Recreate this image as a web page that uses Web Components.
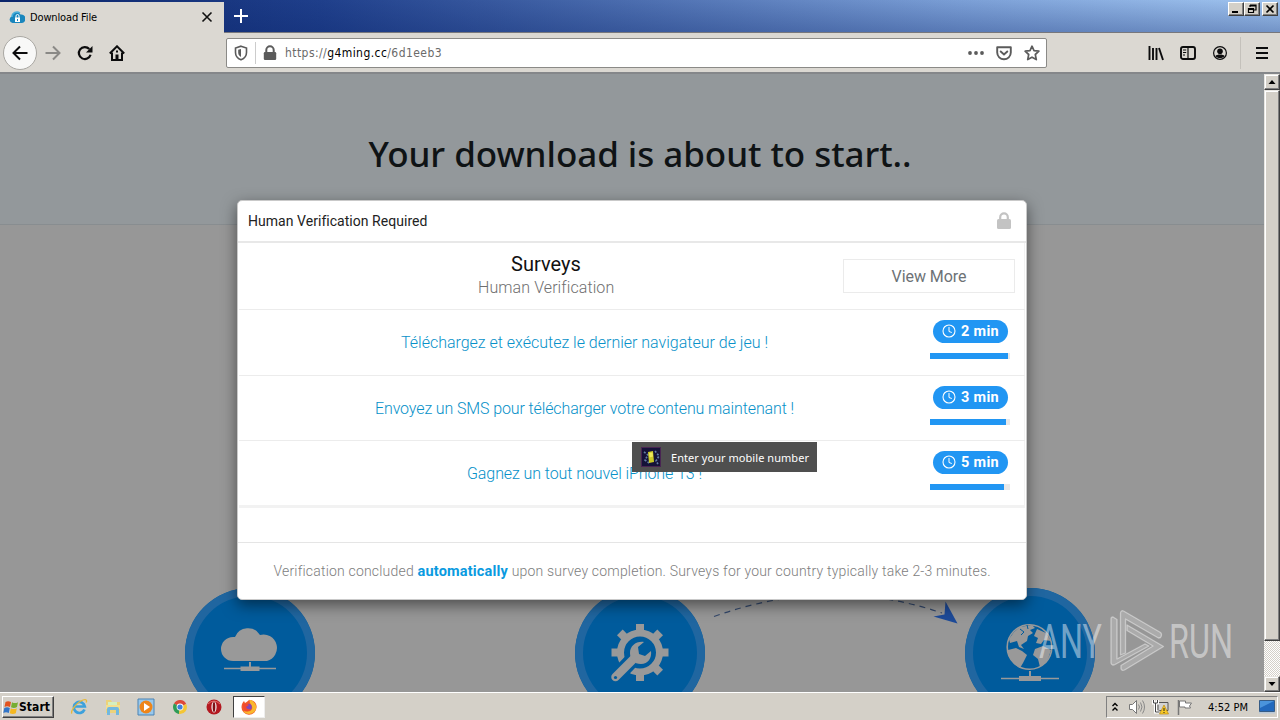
<!DOCTYPE html>
<html lang="en">
<head>
<meta charset="utf-8">
<title>Download File</title>
<style>
  * { box-sizing: border-box; }
  body {
    margin: 0;
    width: 1280px;
    height: 720px;
    overflow: hidden;
    display: flex;
    flex-direction: column;
    font-family: "DejaVu Sans Condensed", "DejaVu Sans", sans-serif;
    font-size: 11px;
    color: #000;
  }
</style>
</head>
<body>
  <tab-strip></tab-strip>
  <nav-toolbar></nav-toolbar>
  <page-view></page-view>
  <task-bar></task-bar>

<script>
const ICONS = {
  cloudlock: ['0 0 16 14', '<path d="M3.5 13a3.3 3.3 0 0 1-.6-6.400A4.700 4.700 0 0 1 11.500 4.500 4.300 4.300 0 0 1 13 13Z" fill="#1a86bd"/><path d="M3 7a5 5 0 0 1 8-4" fill="none" stroke="#47aedb" stroke-width="1.500"/><path d="M6 7.500h5v4.500H6Z" fill="#fff"/><path d="M7 8V6a1.500 1.500 0 0 1 3 0v2" fill="none" stroke="#fff"/><path d="M8.500 9v2" stroke="#1a86bd"/>'],
  close: ['0 0 16 16', '<path d="m3.500 3.500 9 9m0-9-9 9" stroke="#111" stroke-width="1.600"/>'],
  plus: ['0 0 16 16', '<path d="M8 1v14M1 8h14" stroke="#fff" stroke-width="2"/>'],
  back: ['0 0 16 16', '<path d="M15.500 8H2m6-6.500L1.500 8 8 14.500" fill="none" stroke="#0c0c0d" stroke-width="2"/>'],
  forward: ['0 0 16 16', '<path d="M.500 8H14M8 1.500 14.500 8 8 14.500" fill="none" stroke="#8a8986" stroke-width="2"/>'],
  reload: ['0 0 16 16', '<path d="M13.600 9.800A6 6 0 1 1 12.300 4" fill="none" stroke="#0c0c0d" stroke-width="2.200"/><path d="M15.500 1v6.500H9Z" fill="#0c0c0d"/>'],
  home: ['0 0 16 16', '<path d="M.8 8.500 8 1.300l7.200 7.200" fill="none" stroke="#0c0c0d" stroke-width="2"/><path d="M3 7.500V15h10V7.500" fill="none" stroke="#0c0c0d" stroke-width="2"/><path d="M6.500 15V9.500h3V15Z" fill="#0c0c0d"/><path d="M8 5.500v2" stroke="#0c0c0d" stroke-width="2"/>'],
  shield: ['0 0 16 16', '<path d="M8 1.200 13.500 3v4.500c0 3.500-2.200 6-5.500 7.300C4.700 13.500 2.500 11 2.500 7.500V3Z" fill="none" stroke="#5b5b5b" stroke-width="1.600"/><path d="M8 4v8C6 10.800 5.200 9.500 5.200 7.500V4.800Z" fill="#5b5b5b"/>'],
  lock: ['0 0 16 16', '<path d="M4.300 8V5a3.700 3.700 0 0 1 7.400 0v3" fill="none" stroke="currentColor" stroke-width="2"/><rect x="1.800" y="7" width="12.400" height="8" rx="1.200" fill="currentColor"/>'],
  dots: ['0 0 16 16', '<g fill="#5b5b5b"><circle cx="2" cy="8" r="1.900"/><circle cx="8" cy="8" r="1.900"/><circle cx="14" cy="8" r="1.900"/></g>'],
  pocket: ['0 0 16 16', '<path d="M1.200 2.200h13.600v5.300a6.800 6.800 0 0 1-13.600 0Z" fill="none" stroke="#5b5b5b" stroke-width="1.900" stroke-linejoin="round"/><path d="m4.700 6.500 3.300 3 3.300-3" fill="none" stroke="#5b5b5b" stroke-width="1.900" stroke-linecap="round"/>'],
  star: ['0 0 16 16', '<path d="m8 1.200 2 4.500 4.900.5-3.600 3.300 1 5.100L8 12.200l-4.300 2.400 1-5.100L1.100 6.200 6 5.700Z" fill="none" stroke="#5b5b5b" stroke-width="1.700" stroke-linejoin="round"/>'],
  library: ['0 0 16 16', '<path d="M1.500 1v14M5 3v12M8.500 3v12M11 3l4 12" fill="none" stroke="#0c0c0d" stroke-width="1.900"/>'],
  sidebar: ['0 0 16 16', '<rect x="1" y="2" width="14" height="12" rx="2" fill="none" stroke="#0c0c0d" stroke-width="1.900"/><path d="M8 2v12M3 5h3.200M3 7.500h3.200M3 10h2" stroke="#0c0c0d" stroke-width="1.200"/>'],
  account: ['0 0 16 16', '<circle cx="8" cy="8" r="6.400" fill="none" stroke="#0c0c0d" stroke-width="1.200"/><circle cx="8" cy="6.300" r="2.800" fill="#0c0c0d"/><path d="M3.500 11c1-2 8-2 9 0-1.500 2.800-7.500 2.800-9 0Z" fill="#0c0c0d"/>'],
  menu: ['0 0 16 16', '<path d="M2 3h12M2 8h12M2 13h12" stroke="#0c0c0d" stroke-width="2"/>'],
  minimize: ['0 0 12 10', '<path d="M2 8h6" stroke="#000" stroke-width="2"/>'],
  restore: ['0 0 12 10', '<path d="M4 1h6v5H8M4 1v2M4 2h6" fill="none" stroke="#000" stroke-width="1.200"/><path d="M2.500 4.500h5v4h-5Zm0 .8h5" fill="none" stroke="#000" stroke-width="1.200"/>'],
  winclose: ['0 0 12 10', '<path d="m2.500 1.500 7 7m0-7-7 7" stroke="#000" stroke-width="1.700"/>'],
  up: ['0 0 8 8', '<path d="M4 2 7.500 6H.5Z" fill="#000"/>'],
  down: ['0 0 8 8', '<path d="M4 6 .5 2h7Z" fill="#000"/>'],
  padlock: ['0 0 14 17', '<path d="M3.200 8V5.200a3.800 3.800 0 0 1 7.600 0V8" fill="none" stroke="#c3c3c3" stroke-width="2.200"/><rect y="7" width="14" height="10" rx="1.500" fill="#c3c3c3"/>'],
  clock: ['0 0 14 14', '<circle cx="7" cy="7" r="6" fill="none" stroke="#fff" stroke-width="1.100"/><path d="M7 3v4.500l2.800 1" fill="none" stroke="#fff"/>'],
  game: ['0 0 20 20', '<path d="M0 0h20v20H0Z" fill="#141238"/><path d="M0 0h20v20H0Z" fill="none" stroke="#482452" stroke-width="2"/><path d="M3 5l4 3-3 5 4 3m6-12 4 5-3 5 2 3" fill="none" stroke="#617fa5" stroke-width="1.600" stroke-dasharray="2 1.500"/><path d="m7 5 5-1 1 11-5 1Z" fill="#c9c826"/><path d="m8 6 3.500-.5.500 4-3.500 1Z" fill="#ece95a"/>'],
  cloud: ['0 0 130 130', '<path d="M48 73a12 12 0 0 1 0-24h2a14 14 0 0 1 25-2A12.500 12.500 0 1 1 82 73Z" fill="#999"/><path d="M39 80.500h52" stroke="#999" stroke-width="1.500"/><path d="M55.500 78.500h19v4.500h-19ZM64 74h2v5h-2Z" fill="#999"/>'],
  gear: ['0 0 130 130', '<g fill="#999"><path d="M61 43v-7h8v7Z"/><path d="M61 43v-7h8v7Z" transform="rotate(45 65 64.500)"/><path d="M61 43v-7h8v7Z" transform="rotate(90 65 64.500)"/><path d="M61 43v-7h8v7Z" transform="rotate(135 65 64.500)"/><path d="M61 43v-7h8v7Z" transform="rotate(180 65 64.500)"/><path d="M61 43v-7h8v7Z" transform="rotate(270 65 64.500)"/><path d="M61 43v-7h8v7Z" transform="rotate(315 65 64.500)"/></g><circle cx="65" cy="64.500" r="19.500" fill="none" stroke="#999" stroke-width="7"/><path d="m40 90 20-21" stroke="#005b9c" stroke-width="15"/><path d="m40.500 89 20-20" stroke="#999" stroke-width="8.500" stroke-linecap="round"/><path d="M69 54c-8-1-14 4-14 11 0 6 4 11 11 11 7 0 11-6 10-13l-6 5-6-2-1-7Z" fill="#999"/><circle cx="40.500" cy="89.500" r="1.600" fill="#005b9c"/>'],
  globe: ['0 0 130 130', '<circle cx="64.500" cy="59" r="22.300" fill="none" stroke="#999" stroke-width="1.600"/><path d="m49 44 6-5 12-2 3 3-5 2 3 3-5 3-1 5-6 4 3 4-5-2-2-6-7 2-1-4Zm23-3 9 4 5 8-7-1-3 4-5-1 2-5-4-2ZM43 62l8-2 6 3 5 4-4 8-3 5-6-4-6-9ZM70 61l8-3 8 4-4 12-7 5-2-8-5-4Z" fill="#999"/><path d="M55 41l4 3-3 3M62 37l1 4" stroke="#005b9c" fill="none"/><path d="M36 90.500h58" stroke="#999" stroke-width="1.500"/><path d="M54 88h22v5H54ZM64 83h2v5h-2Z" fill="#999"/>'],
  windows: ['0 0 16 16', '<path d="M2.500 3Q5 1.300 8 3L7 8Q4 6.500 1.500 8Z" fill="#e2531f"/><path d="M9 3.200q3 1.700 6 0L14 8q-3 1.700-6 .2Z" fill="#77ae33"/><path d="M1.300 9Q4 7.500 6.800 9l-1 5Q3 12.500.3 14Z" fill="#3275c8"/><path d="M7.800 9.200q3 1.700 6 0l-1 5q-3 1.500-6 0Z" fill="#f5b821"/>'],
  ie: ['0 0 18 18', '<path d="M14.500 11.500a5.500 5.500 0 1 1 .3-3H5" fill="none" stroke="#3da1dc" stroke-width="2.700"/><path d="M2 15.500C0 13 7 4 13 2c4-1.200 4 1 3 2.500" fill="none" stroke="#e6b83b" stroke-width="1.300"/>'],
  explorer: ['0 0 18 18', '<path d="M2 2h5l1 2h8v11H2Z" fill="#ecd27a"/><path d="M4 4h9v5H4Z" fill="#d5efbe"/><path d="M2 7h14v4H2Z" fill="#f3df90"/><path d="M3 17v-6q0-2 2-2h8q2 0 2 2v6h-3v-5H6v5Z" fill="#72b8df"/>'],
  player: ['0 0 18 18', '<path d="M1 1h16v16H1Z" fill="#98c8ec" stroke="#4b83b4"/><circle cx="9" cy="9" r="6.500" fill="#ee8519"/><path d="m7 5 6 4-6 4Z" fill="#fff"/>'],
  chrome: ['0 0 18 18', '<path d="M9 9 3 5.500A6.800 6.800 0 0 1 15.200 6Z" fill="#dd4939"/><path d="M9 9 3 5.500A7 7 0 0 0 8 16Z" fill="#2e9b56"/><path d="M9 9l6.200-3A7 7 0 0 1 8 16Z" fill="#f4c635"/><circle cx="9" cy="9" r="3.400" fill="#fff"/><circle cx="9" cy="9" r="2.600" fill="#3f7fda"/>'],
  opera: ['0 0 18 18', '<circle cx="9" cy="9" r="7.500" fill="#b31820"/><path d="M3 6q6-6 12 0" fill="none" stroke="#e36b65"/><ellipse cx="9" cy="9" rx="2.600" ry="5.500" fill="#f3eaea"/><ellipse cx="9" cy="9" rx="1.300" ry="5" fill="#7f1015"/>'],
  firefox: ['0 0 18 18', '<path d="M9 2c5 0 8 3 7.500 7.500A7.500 7.500 0 0 1 1.500 9C1.500 6 3 4 4 3l1 2Q7 4 9 2Z" fill="#f2592b"/><path d="M9 1c3 1 7 4 7.300 8a7 7 0 0 1-7 7c-3 0-5-1-6-3q8 2 9-3c0-3-3-4-3-9Z" fill="#f9b82f"/><circle cx="8.500" cy="9" r="3.300" fill="#8348b7"/><path d="M3 6q4-1 6 1l-3 2q1 3 5 2-2 3-5 2-3-1-3-7Z" fill="#f14a2f"/>'],
  chevrons: ['0 0 8 12', '<path d="M1.500 5 4 2.500 6.500 5M1.500 9.500 4 7l2.500 2.500" fill="none" stroke="#000" stroke-width="1.400"/>'],
  speaker: ['0 0 18 16', '<path d="M1.500 5.500h3l4-4v13l-4-4h-3Z" fill="#fff" stroke="#777"/><path d="M10.500 5.500q2 2.500 0 5m2-7q3 4.500 0 9m2-11q4 6.500 0 13" fill="none" stroke="#888"/>'],
  network: ['0 0 18 16', '<path d="M6 3.500h10v8H6Z" fill="#d3d3d3" stroke="#555"/><path d="M1.500 1v3h4V1M3.500 4v9h4" fill="none" stroke="#fff" stroke-width="3"/><path d="M1.500 1v3h4V1M3.500 4v9h4" fill="none" stroke="#444"/><path d="m12 6 4.500 9h-9Z" fill="#f8c927" stroke="#bb8a11" stroke-width=".7"/><path d="M12 9v3m0 1v1" stroke="#222"/>'],
  flag: ['0 0 18 16', '<path d="M2.500 1v15" stroke="#777" stroke-width="1.500"/><path d="M3.500 2h6v2h6l-2 3 1 2H9V8H3.500Z" fill="#fff" stroke="#777"/>'],
  desktop: ['0 0 16 14', '<path d="M.5.500h15v11H.5Z" fill="#2269bd" stroke="#365c86"/><path d="M1 1h14L1 8Z" fill="#4a94dc"/><path d="M0 12h16v1.500H0Z" fill="#b8c8d8"/>']
};

// base class: opens the shadow root and fills it once attached
class Base extends HTMLElement {
  constructor() {
    super();
    this.attachShadow({ mode: 'open' });
  }
  connectedCallback() {
    this.shadowRoot.innerHTML = `<style>* { box-sizing: border-box; }</style>${this.render()}`;
  }
}

class UiIcon extends Base {
  render() {
    const [box, body] = ICONS[this.getAttribute('name')];
    const w = this.getAttribute('w') || 16;
    const h = this.getAttribute('h') || w;
    return `
      <style>
        :host { display: block; flex: none; }
        svg { display: block; }
      </style>
      <svg width="${w}" height="${h}" viewBox="${box}">${body}</svg>`;
  }
}
customElements.define('ui-icon', UiIcon);

// single line of text, tracked so that it fills the width in px
class FitLine extends Base {
  render() {
    return `
      <style>
        :host { display: inline-block; white-space: nowrap; flex: none; }
      </style>
      <span><slot></slot></span>`;
  }
  connectedCallback() {
    super.connectedCallback();
    const width = Number(this.getAttribute('width'));
    const span = this.shadowRoot.querySelector('span');
    const natural = span.getBoundingClientRect().width;
    const count = this.textContent.length;
    this.style.width = `${width}px`;
    span.style.letterSpacing = `${(width - natural) / count}px`;
  }
}
customElements.define('fit-line', FitLine);

class TabStrip extends Base {
  render() {
    return `
      <style>
        :host {
          display: flex;
          height: 33px;
          background:
            linear-gradient(to bottom, rgba(10, 36, 106, 0) 0%, rgba(10, 36, 106, .3) 100%),
            linear-gradient(to right, #0a246a 0, #1f3f8b 25%, #7b9fd6 75%, #a0c4ef 100%);
          border-bottom: 1px solid #77777c;
        }
        .tab {
          width: 224px;
          margin-top: 2px;
          height: 31px;
          background: #dbd8d2;
          display: flex;
          align-items: center;
          padding: 0 9px 1px;
          gap: 5px;
        }
        .tab .x { margin-left: auto; }
        .add { padding: 8px 9px; }
        .controls { margin-left: auto; display: flex; padding: 2px 2px; }
        .btn {
          width: 16px;
          height: 14px;
          background: #d4d0c8;
          border: 1px solid;
          border-color: #fff #404040 #404040 #fff;
          box-shadow: inset -1px -1px #808080;
          padding: 1px;
        }
        .btn:last-child { margin-left: 2px; }
      </style>
      <div class="tab">
        <ui-icon name="cloudlock" w="16" h="14"></ui-icon>
        <fit-line width="67">Download File</fit-line>
        <ui-icon class="x" name="close" w="16"></ui-icon>
      </div>
      <div class="add"><ui-icon name="plus" w="16"></ui-icon></div>
      <div class="controls">
        <div class="btn"><ui-icon name="minimize" w="12" h="10"></ui-icon></div>
        <div class="btn"><ui-icon name="restore" w="12" h="10"></ui-icon></div>
        <div class="btn"><ui-icon name="winclose" w="12" h="10"></ui-icon></div>
      </div>`;
  }
}
customElements.define('tab-strip', TabStrip);

class NavToolbar extends Base {
  render() {
    return `
      <style>
        :host {
          display: flex;
          align-items: center;
          height: 41px;
          background: #dbd8d2;
          border-bottom: 2px solid #85878a;
          padding: 0 10px 0 3px;
        }
        .left { display: flex; align-items: center; gap: 16px; width: 223px; }
        .back {
          width: 34px;
          height: 34px;
          border-radius: 50%;
          border: 1px solid #a9a7a2;
          background: #f8f8f7;
          padding: 8px;
          margin-right: -8px;
        }
        .url {
          width: 821px;
          height: 30px;
          border: 1px solid #8b8a87;
          border-radius: 2px;
          background: #fff;
          display: flex;
          align-items: center;
          padding: 0 6px;
          color: #6a6a6a;
          font-size: 12px;
        }
        .sep { width: 1px; height: 22px; background: #ccc; margin: 0 6px; }
        .host { color: #000; }
        .lock { color: #5b5b5b; margin-right: 7px; }
        .actions { display: flex; gap: 12px; margin-left: auto; }
        .right { display: flex; align-items: center; gap: 16px; margin-left: auto; }
        .line { width: 1px; height: 32px; background: #c4c1bb; margin: 0 -3px 0 -4px; }
      </style>
      <div class="left">
        <div class="back"><ui-icon name="back" w="16"></ui-icon></div>
        <ui-icon name="forward" w="16"></ui-icon>
        <ui-icon name="reload" w="16"></ui-icon>
        <ui-icon name="home" w="16"></ui-icon>
      </div>
      <div class="url">
        <ui-icon name="shield" w="16"></ui-icon>
        <div class="sep"></div>
        <ui-icon class="lock" name="lock" w="16"></ui-icon>
        <fit-line width="157">https://<span class="host">g4ming.cc</span>/6d1eeb3</fit-line>
        <div class="actions">
          <ui-icon name="dots" w="16"></ui-icon>
          <ui-icon name="pocket" w="16"></ui-icon>
          <ui-icon name="star" w="16"></ui-icon>
        </div>
      </div>
      <div class="right">
        <ui-icon name="library" w="16"></ui-icon>
        <ui-icon name="sidebar" w="16"></ui-icon>
        <ui-icon name="account" w="16"></ui-icon>
        <div class="line"></div>
        <ui-icon name="menu" w="16"></ui-icon>
      </div>`;
  }
}
customElements.define('nav-toolbar', NavToolbar);

class ScrollBar extends Base {
  render() {
    return `
      <style>
        :host {
          display: flex;
          flex-direction: column;
          width: 16px;
          flex: none;
          background: repeating-conic-gradient(#fff 0 25%, #d4d0c8 0 50%) 0 0 / 2px 2px;
        }
        .btn, .thumb {
          background: #d4d0c8;
          border: 1px solid;
          border-color: #e8e6e1 #404040 #404040 #e8e6e1;
          box-shadow: inset -1px -1px #808080, inset 1px 1px #fff;
        }
        .btn { height: 16px; padding: 3px; }
        .thumb { height: 551px; margin-bottom: auto; }
      </style>
      <div class="btn"><ui-icon name="up" w="8"></ui-icon></div>
      <div class="thumb"></div>
      <div class="btn"><ui-icon name="down" w="8"></ui-icon></div>`;
  }
}
customElements.define('scroll-bar', ScrollBar);

class FeatureBadge extends Base {
  render() {
    return `
      <style>
        :host {
          display: block;
          width: 130px;
          height: 130px;
          border-radius: 50%;
          background: #005b9c;
          box-shadow: inset 0 0 0 8px #2066a0;
        }
      </style>
      <ui-icon name="${this.getAttribute('icon')}" w="130"></ui-icon>`;
  }
}
customElements.define('feature-badge', FeatureBadge);

class SurveyRow extends Base {
  render() {
    return `
      <style>
        :host {
          display: flex;
          height: 65.5px;
          border-bottom: 1px solid #ececec;
        }
        .title {
          flex: 1;
          text-align: center;
          line-height: 65px;
          font-size: 16px;
          font-weight: 300;
          color: #0791c9;
        }
        .side { width: 95px; padding-top: 10px; }
        .pill {
          width: 75px;
          height: 23px;
          margin-left: 3px;
          border-radius: 12px;
          background: #2196f3;
          color: #fff;
          display: flex;
          align-items: center;
          gap: 5px;
          padding-left: 9px;
          font-size: 14.500px;
          font-weight: 700;
        }
        .pill ui-icon { margin-top: -1px; }
        .track { width: 80px; height: 6px; margin-top: 10px; background: #e8e8e8; }
        .bar { height: 6px; width: ${this.getAttribute('bar')}px; background: #2196f3; }
      </style>
      <div class="title"><slot></slot></div>
      <div class="side">
        <div class="pill"><ui-icon name="clock" w="14"></ui-icon><fit-line width="38">${this.getAttribute('time')}</fit-line></div>
        <div class="track"><div class="bar"></div></div>
      </div>`;
  }
}
customElements.define('survey-row', SurveyRow);

class VerifyModal extends Base {
  render() {
    return `
      <style>
        :host {
          display: flex;
          flex-direction: column;
          width: 790px;
          height: 400px;
          border: 1px solid #c9c9c9;
          border-radius: 5px;
          background: #fff;
          box-shadow: 0 5px 15px rgba(0, 0, 0, .5);
          font-family: Roboto, sans-serif;
        }
        header {
          height: 42px;
          display: flex;
          align-items: center;
          justify-content: space-between;
          padding: 0 15px 0 10px;
          border-bottom: 2px solid #e8e8e8;
          font-size: 14px;
          color: #222;
        }
        header ui-icon { margin-top: -2px; }
        .panel {
          height: 265px;
          margin: 0 1px;
          border-bottom: 3px solid #f2f2f2;
          box-shadow: inset -1px 0 #f2f2f2;
        }
        .top {
          height: 67px;
          display: flex;
          align-items: center;
          padding: 0 10px;
          border-bottom: 1px solid #ececec;
        }
        .names { flex: 1; text-align: center; }
        .names div { height: 23px; line-height: 23px; font-size: 16px; font-weight: 300; color: #6f6f6f; }
        .names .big { font-size: 20px; line-height: 22px; font-weight: 400; color: #111; }
        .more {
          width: 172px;
          height: 34px;
          border: 1px solid #ebebeb;
          line-height: 33px;
          text-align: center;
          font-size: 16px;
          color: #6d7276;
        }
        survey-row:last-child { border-bottom: 0; }
        footer {
          margin-top: auto;
          height: 57px;
          border-top: 1px solid #e5e5e5;
          line-height: 57px;
          text-align: center;
          font-size: 14px;
          font-weight: 300;
          color: #7d7d7d;
        }
        b { color: #0a9ae0; font-weight: 700; font-size: 14.500px; }
      </style>
      <header>
        <fit-line width="179">Human Verification Required</fit-line>
        <ui-icon name="padlock" w="14" h="17"></ui-icon>
      </header>
      <div class="panel">
        <div class="top">
          <div class="names">
            <div class="big"><fit-line width="70">Surveys</fit-line></div>
            <div><fit-line width="136">Human Verification</fit-line></div>
          </div>
          <div class="more"><fit-line width="75">View More</fit-line></div>
        </div>
        <survey-row time="2 min" bar="78"><fit-line width="367">Téléchargez et exécutez le dernier navigateur de jeu !</fit-line></survey-row>
        <survey-row time="3 min" bar="76"><fit-line width="419">Envoyez un SMS pour télécharger votre contenu maintenant !</fit-line></survey-row>
        <survey-row time="5 min" bar="74"><fit-line width="235">Gagnez un tout nouvel iPhone 13 !</fit-line></survey-row>
      </div>
      <footer><fit-line width="717">Verification concluded <b>automatically</b> upon survey completion. Surveys for your country typically take 2-3 minutes.</fit-line></footer>`;
  }
}
customElements.define('verify-modal', VerifyModal);

class AppTooltip extends Base {
  render() {
    return `
      <style>
        :host {
          display: flex;
          align-items: center;
          gap: 10px;
          width: 185px;
          height: 30px;
          padding: 0 9px;
          background: #4f4f4f;
          color: #fff;
          font: 11px "Noto Sans", sans-serif;
        }
      </style>
      <ui-icon name="game" w="20"></ui-icon>
      <fit-line width="138">Enter your mobile number</fit-line>`;
  }
}
customElements.define('app-tooltip', AppTooltip);

class WaterMark extends Base {
  render() {
    return `
      <style>
        :host { display: block; font-family: Roboto, sans-serif; }
        svg { display: block; }
      </style>
      <svg width="220" height="80" viewBox="1030 600 220 80">
        <g fill="#fff" fill-opacity=".46" font-size="49">
          <text x="1039" y="658" textLength="63" lengthAdjust="spacingAndGlyphs">ANY</text>
          <text x="1169" y="658" textLength="64" lengthAdjust="spacingAndGlyphs">RUN</text>
        </g>
        <g fill="#fff" fill-opacity=".2" stroke="#fff" stroke-opacity=".42" stroke-width="1.300" stroke-linejoin="round">
          <path d="M1120.500 655v-42q.5-3 3-2l37 21.500q2 2 0 5l-2 .5-33-19v34Z"/>
          <path d="M1127 625l36.500 21.500-39 23.500q-3 1-3.500-1.500v-3l32-19.500-26-15.500Z"/>
          <path d="M1117 619.500l-4-2.500q-2 0-2 2v44q1 3 4 1.500l34-18.500-4-2-28 15Z"/>
        </g>
      </svg>`;
  }
}
customElements.define('water-mark', WaterMark);

class PageView extends Base {
  render() {
    return `
      <style>
        :host { display: flex; height: 618px; background: #979797; position: relative; }
        .view { flex: 1; overflow: hidden; }
        .content { width: 1280px; }
        .hero {
          height: 151px;
          padding-top: 58px;
          background: #93989b;
          border-bottom: 1px solid #888d90;
          text-align: center;
          font: 500 35px/44px "Noto Sans", sans-serif;
          color: #0f1315;
        }
        .features {
          display: grid;
          grid-template-columns: repeat(3, 390px);
          justify-content: center;
          justify-items: center;
          margin-top: 363px;
        }
        .arrow { position: absolute; left: 705px; top: 506px; }
        verify-modal { position: absolute; left: 237px; top: 126px; }
        app-tooltip { position: absolute; left: 632px; top: 368px; }
        water-mark { position: absolute; left: 1030px; top: 526px; }
      </style>
      <div class="view">
        <div class="content">
          <div class="hero"><fit-line width="543">Your download is about to start..</fit-line></div>
          <div class="features">
            <feature-badge icon="cloud"></feature-badge>
            <feature-badge icon="gear"></feature-badge>
            <feature-badge icon="globe"></feature-badge>
          </div>
        </div>
      </div>
      <svg class="arrow" width="260" height="50" viewBox="705 580 260 50">
        <path d="M714 616.500Q830 575 942 613" fill="none" stroke="#34496c" stroke-width="1.200" stroke-dasharray="6 5"/>
        <path d="m957.500 623.500-24-7 11-2 1-13Z" fill="#1d4a98"/>
      </svg>
      <scroll-bar></scroll-bar>
      <verify-modal></verify-modal>
      <app-tooltip></app-tooltip>
      <water-mark></water-mark>`;
  }
}
customElements.define('page-view', PageView);

class TaskBar extends Base {
  render() {
    return `
      <style>
        :host {
          display: flex;
          align-items: center;
          height: 28px;
          background: #d4d0c8;
          border-top: 1px solid #fff;
          padding: 1px 2px 0;
        }
        .start {
          width: 52px;
          height: 22px;
          display: flex;
          align-items: center;
          gap: 0;
          border: 1px solid;
          border-color: #fff #404040 #404040 #fff;
          box-shadow: inset -1px -1px #808080;
          font-size: 12px;
          font-weight: 700;
        }
        .icons { display: flex; gap: 15.700px; margin-left: 16px; }
        .active {
          width: 32px;
          height: 22px;
          margin-left: 10px;
          padding: 1px 6px;
          background: #fff;
          border: 1px solid;
          border-color: #404040 #eee #eee #404040;
        }
        .tray {
          width: 172px;
          height: 22px;
          margin-left: auto;
          display: flex;
          align-items: center;
          border: 1px solid;
          border-color: #808080 #fff #fff #808080;
          padding: 0 2px 0 4px;
          gap: 6px;
        }
        .clock { margin: 0 5px 0 8px; }
        .wide { margin-left: 3px; }
      </style>
      <div class="start"><ui-icon name="windows" w="16"></ui-icon><fit-line width="31">Start</fit-line></div>
      <div class="icons">
        <ui-icon name="ie" w="18"></ui-icon>
        <ui-icon name="explorer" w="18"></ui-icon>
        <ui-icon name="player" w="18"></ui-icon>
        <ui-icon name="chrome" w="18"></ui-icon>
        <ui-icon name="opera" w="18"></ui-icon>
      </div>
      <div class="active"><ui-icon name="firefox" w="18"></ui-icon></div>
      <div class="tray">
        <ui-icon name="chevrons" w="8" h="12"></ui-icon>
        <ui-icon class="wide" name="speaker" w="18" h="16"></ui-icon>
        <ui-icon name="network" w="18" h="16"></ui-icon>
        <ui-icon name="flag" w="18" h="16"></ui-icon>
        <fit-line class="clock" width="40">4:52 PM</fit-line>
        <ui-icon name="desktop" w="16" h="14"></ui-icon>
      </div>`;
  }
}
customElements.define('task-bar', TaskBar);
</script>
</body>
</html>
